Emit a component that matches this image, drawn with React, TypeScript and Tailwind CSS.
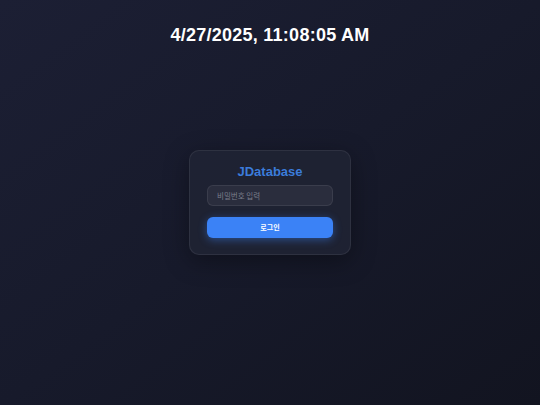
import React from "react";

export default function App() {
  return (
    <div
      className="w-[540px] h-[405px] overflow-hidden flex flex-col items-center bg-linear-to-br from-[#1c1f34] via-[#171a2b] to-[#121420]"
      style={{ fontFamily: '"Liberation Sans", Arial, "Noto Sans CJK KR", sans-serif' }}
    >
      <div className="pt-[25px] h-[46px] text-[18px] leading-[21px] font-bold tracking-[0.25px] text-white">
        4/27/2025, 11:08:05 AM
      </div>
      <div className="mt-[104px] w-[162px] h-[105px] rounded-[10px] border border-white/[0.07] bg-[#212435]/80 shadow-[0_6px_24px_rgba(0,0,0,0.35)] px-[17px] pt-[13px] flex flex-col">
        <div className="h-[16px] text-center text-[13px] leading-[16px] font-bold text-[#3b7cdb]">
          JDatabase
        </div>
        <div className="mt-[5px] h-[21px] rounded-[6px] border border-white/[0.08] bg-[#2a2d3d] flex items-center px-[9px]">
          <span
            className="text-[7.5px] leading-none text-[#7a7e8b]"
            style={{ fontFamily: '"Noto Sans CJK KR", "Liberation Sans", sans-serif' }}
          >
            비밀번호 입력
          </span>
        </div>
        <div className="mt-[11px] h-[21px] rounded-[6px] bg-[#3b82f6] shadow-[0_2px_8px_rgba(59,130,246,0.45)] flex items-center justify-center">
          <span
            className="text-[7px] leading-none font-bold text-white"
            style={{ fontFamily: '"Noto Sans CJK KR", "Liberation Sans", sans-serif' }}
          >
            로그인
          </span>
        </div>
      </div>
    </div>
  );
}
